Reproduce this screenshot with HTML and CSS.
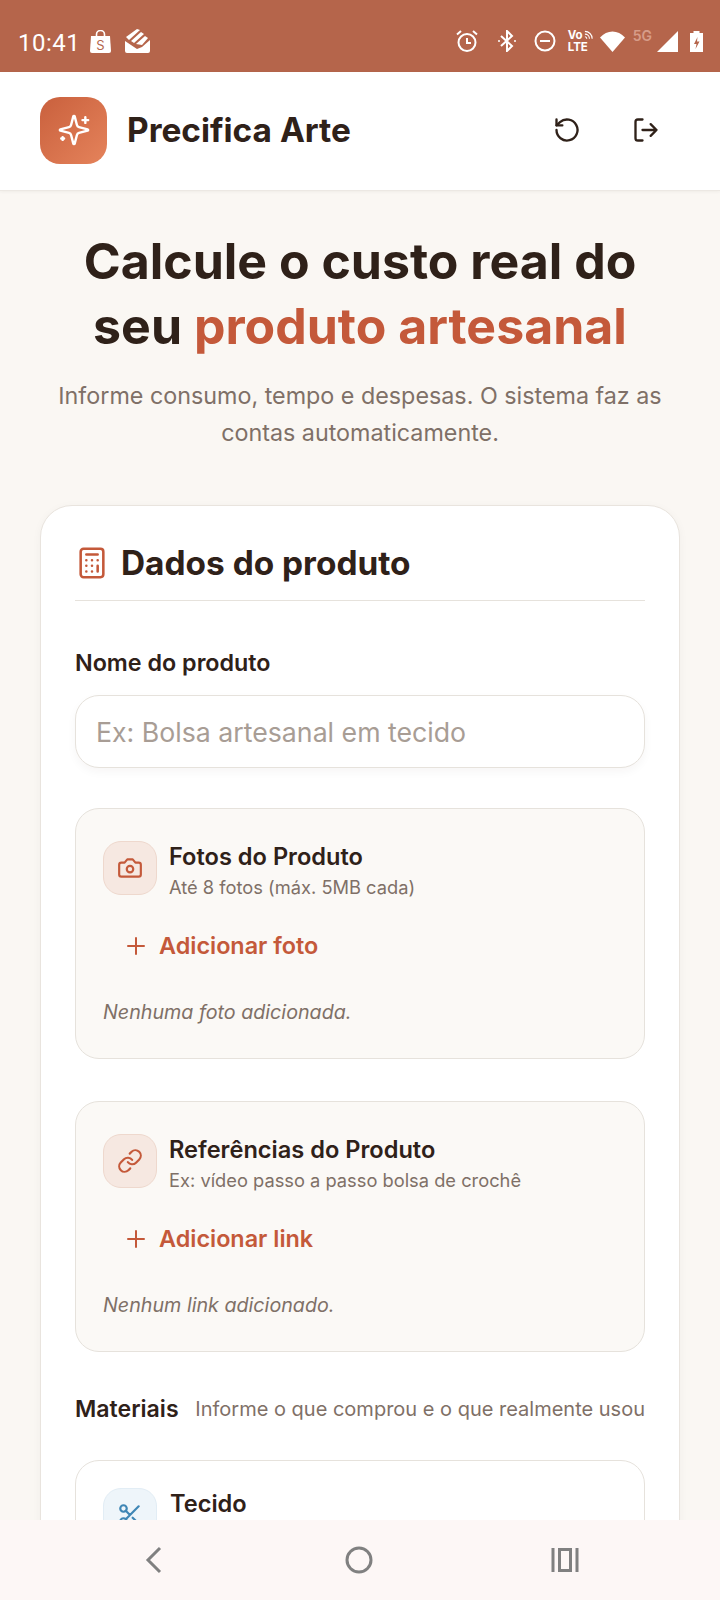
FILE: index.html
```html
<!DOCTYPE html>
<html lang="pt-BR">
<head>
    <meta charset="UTF-8">
    <meta name="viewport" content="width=device-width, initial-scale=1.0">
    <title>Precifica Arte</title>
    <link rel="stylesheet" href="styles.css">
</head>
<body>
    <div class="status-bar">
        <div class="status-left">
            <span class="clock">10:41</span>
            <svg class="bag" width="21" height="23" viewBox="0 0 21 23"><path d="M1 6h19l1 15a2 2 0 0 1-2 2H2a2 2 0 0 1-2-2z" fill="#fff"/><path d="M6.500 7V4.500a4 4 0 0 1 8 0V7" fill="none" stroke="#fff" stroke-width="1.600"/><text x="10.500" y="20" font-size="13" text-anchor="middle" fill="#b5654b" font-family="Inter">S</text></svg>
            <svg class="notif" width="25" height="24" viewBox="0 0 25 24"><path d="M1 8 12 0l3 1L4 11zM6 12 16 3l3 2L9 14zM11 15 20 7l3 2-6 7zM0 12l3 2 9 6 5-2 8-7v11a2 2 0 0 1-2 2H2a2 2 0 0 1-2-2z" fill="#fff"/></svg>
        </div>
        <div class="status-right">
            <svg class="ic-alarm" width="22" height="22" viewBox="0 0 22 22" fill="none" stroke="#fff" stroke-width="2"><circle cx="11" cy="12.500" r="8.500"/><path d="M11 8v5h4M1 4.500 5 1M21 4.500 17 1"/></svg>
            <svg class="ic-bt" width="18" height="22" viewBox="0 0 18 22" fill="none" stroke="#fff" stroke-width="2"><path d="M3 6l11 10-5 5V1l5 5L3 16"/><circle cx="1" cy="11" r="1" fill="#fff" stroke="none"/><circle cx="17" cy="11" r="1" fill="#fff" stroke="none"/></svg>
            <svg class="ic-dnd" width="22" height="22" viewBox="0 0 22 22" fill="none" stroke="#fff" stroke-width="2"><circle cx="11" cy="11" r="9.500"/><path d="M6 11h10"/></svg>
            <span class="volte">
                <span class="vo">Vo<svg width="10" height="10" viewBox="0 0 10 10" fill="none" stroke="#fff" stroke-width="1.200"><path d="M1 1a8 8 0 0 1 8 8M1 4a5 5 0 0 1 5 5M1 7a2 2 0 0 1 2 2"/></svg></span>
                <span>LTE</span>
            </span>
            <svg class="ic-wifi" width="25" height="21" viewBox="0 0 25 21"><path d="M0 6.500C7-1.500 18-1.500 25 6.500L12.500 21z" fill="#fff"/></svg>
            <span class="five-g">5G</span>
            <svg class="ic-signal" width="21" height="21" viewBox="0 0 21 21"><path d="M21 0v21H0z" fill="#fff"/></svg>
            <svg class="ic-batt" width="13" height="21" viewBox="0 0 13 21"><path d="M3.500 0h6v2H13v19H0V2h3.500z" fill="#fff"/><path d="M7.500 6 4 13h2.500L5.500 18 9.500 10.500H7z" fill="#b5654b"/></svg>
        </div>
    </div>

    <header class="app-header">
        <div class="logo">
            <svg width="34" height="34" viewBox="0 0 24 24" fill="none" stroke="#fff" stroke-width="1.700" stroke-linecap="round" stroke-linejoin="round"><path d="M9.937 15.500A2 2 0 0 0 8.500 14.063l-6.135-1.582a.5.5 0 0 1 0-.962L8.500 9.936A2 2 0 0 0 9.937 8.500l1.582-6.135a.5.5 0 0 1 .963 0L14.063 8.500A2 2 0 0 0 15.500 9.937l6.135 1.581a.5.5 0 0 1 0 .964L15.500 14.063a2 2 0 0 0-1.437 1.437l-1.582 6.135a.5.5 0 0 1-.963 0z"/><path d="M20 3v4M22 5h-4M4 17v2M5 18H3"/></svg>
        </div>
        <span class="app-name">Precifica Arte</span>
        <div class="header-actions">
            <svg width="28" height="28" viewBox="0 0 24 24" fill="none" stroke="#2f2119" stroke-width="2" stroke-linecap="round" stroke-linejoin="round"><path d="M3 12a9 9 0 1 0 3-6.700L3 8"/><path d="M3 3v5h5"/></svg>
            <svg width="28" height="28" viewBox="0 0 24 24" fill="none" stroke="#2f2119" stroke-width="2" stroke-linecap="round" stroke-linejoin="round"><path d="M9 21H5a2 2 0 0 1-2-2V5a2 2 0 0 1 2-2h4"/><path d="M16 17l5-5-5-5M21 12H9"/></svg>
        </div>
    </header>

    <main class="content">
        <section class="hero">
            <h1>Calcule o custo real do<br>seu <span class="accent">produto artesanal</span></h1>
            <p>Informe consumo, tempo e despesas. O sistema faz as contas automaticamente.</p>
        </section>

        <section class="card">
            <div class="card-title">
                <svg width="34" height="34" viewBox="0 0 24 24" fill="none" stroke="#c4593a" stroke-width="1.800" stroke-linecap="round" stroke-linejoin="round"><rect x="4" y="2" width="16" height="20" rx="2"/><path d="M8 6h8M16 14v4M8 10h.01M12 10h.01M16 10h.01M8 14h.01M12 14h.01M8 18h.01M12 18h.01"/></svg>
                <h2>Dados do produto</h2>
            </div>

            <label class="field-label" for="nome">Nome do produto</label>
            <input class="text-input" id="nome" type="text" placeholder="Ex: Bolsa artesanal em tecido">

            <div class="media-box">
                <div class="box-head">
                    <div class="box-icon">
                        <svg width="26" height="26" viewBox="0 0 24 24" fill="none" stroke="#c4593a" stroke-width="2" stroke-linecap="round" stroke-linejoin="round"><path d="M14.500 4h-5L7 7H4a2 2 0 0 0-2 2v9a2 2 0 0 0 2 2h16a2 2 0 0 0 2-2V9a2 2 0 0 0-2-2h-3z"/><circle cx="12" cy="13" r="3"/></svg>
                    </div>
                    <div>
                        <h3>Fotos do Produto</h3>
                        <p class="box-sub">Até 8 fotos (máx. 5MB cada)</p>
                    </div>
                </div>
                <div class="add-btn">
                    <svg width="24" height="24" viewBox="0 0 24 24" fill="none" stroke="#c4593a" stroke-width="2" stroke-linecap="round"><path d="M12 4v16M4 12h16"/></svg>
                    Adicionar foto
                </div>
                <p class="empty">Nenhuma foto adicionada.</p>
            </div>

            <div class="media-box">
                <div class="box-head">
                    <div class="box-icon">
                        <svg width="26" height="26" viewBox="0 0 24 24" fill="none" stroke="#c4593a" stroke-width="2" stroke-linecap="round" stroke-linejoin="round"><path d="M10 13a5 5 0 0 0 7.540.54l3-3a5 5 0 0 0-7.070-7.070l-1.720 1.710"/><path d="M14 11a5 5 0 0 0-7.540-.54l-3 3a5 5 0 0 0 7.070 7.070l1.710-1.710"/></svg>
                    </div>
                    <div>
                        <h3>Referências do Produto</h3>
                        <p class="box-sub">Ex: vídeo passo a passo bolsa de crochê</p>
                    </div>
                </div>
                <div class="add-btn">
                    <svg width="24" height="24" viewBox="0 0 24 24" fill="none" stroke="#c4593a" stroke-width="2" stroke-linecap="round"><path d="M12 4v16M4 12h16"/></svg>
                    Adicionar link
                </div>
                <p class="empty">Nenhum link adicionado.</p>
            </div>

            <div class="materials-head">
                <span class="materials-title">Materiais</span>
                <span class="materials-note">Informe o que comprou e o que realmente usou</span>
            </div>

            <div class="material-card">
                <div class="box-icon blue">
                    <svg width="26" height="26" viewBox="0 0 24 24" fill="none" stroke="#3f86b5" stroke-width="2" stroke-linecap="round" stroke-linejoin="round"><circle cx="6" cy="6" r="3"/><circle cx="6" cy="18" r="3"/><path d="M20 4 8.120 15.880M14.470 14.480 20 20M8.120 8.120 12 12"/></svg>
                </div>
                <h3>Tecido</h3>
            </div>
        </section>
    </main>

    <nav class="nav-bar">
        <svg width="24" height="32" viewBox="0 0 24 32" fill="none" stroke="#808080" stroke-width="3"><path d="M19 4 7 16l12 12"/></svg>
        <svg width="28" height="28" viewBox="0 0 28 28" fill="none" stroke="#808080" stroke-width="3"><circle cx="14" cy="14" r="12"/></svg>
        <svg width="28" height="24" viewBox="0 0 28 24" fill="none" stroke="#808080" stroke-width="3"><path d="M2 0v24M26 0v24"/><rect x="8.500" y="1.500" width="11" height="21"/></svg>
    </nav>
</body>
</html>
```

FILE: styles.css
```css
* {
    box-sizing: border-box;
}

body {
    font-family: Inter, "Liberation Sans", sans-serif;
    background-color: #faf7f3;
    color: #2f2119;
    margin: 0;
    width: 720px;
    height: 1600px;
    display: flex;
    flex-direction: column;
    overflow: hidden;
}

h1, h2, h3, p {
    margin: 0;
}

/* status bar */
.status-bar {
    flex: none;
    height: 72px;
    background-color: #b5654b;
    color: #fff;
    display: flex;
    justify-content: space-between;
    align-items: center;
    padding: 10px 17px 0 18px;
}

.status-left {
    display: flex;
    align-items: center;
}

.clock {
    font-family: Roboto, sans-serif;
    font-size: 24px;
    letter-spacing: 0.5px;
    margin-top: 3px;
}

.bag {
    margin-left: 10px;
}

.notif {
    margin-left: 14px;
}

.status-right {
    display: flex;
    align-items: center;
}

.ic-bt {
    margin-left: 20px;
}

.ic-dnd {
    margin-left: 18px;
}

.volte {
    display: flex;
    flex-direction: column;
    font-size: 11.500px;
    font-weight: 700;
    line-height: 12px;
    width: 25px;
    margin-left: 12px;
}

.vo {
    display: flex;
    align-items: center;
    gap: 1px;
}

.ic-wifi {
    margin-left: 7px;
}

.five-g {
    font-size: 14px;
    font-weight: 600;
    line-height: 14px;
    color: #d79c88;
    align-self: flex-start;
    margin-left: 8px;
}

.ic-signal {
    margin-left: 5px;
}

.ic-batt {
    margin-left: 12px;
}

/* header */
.app-header {
    flex: none;
    height: 119px;
    background-color: #fff;
    border-bottom: 1px solid #ece8e3;
    box-shadow: 0 1px 3px rgba(47, 33, 25, 0.05);
    display: flex;
    align-items: center;
    padding: 0 40px 2px;
}

.logo {
    width: 67px;
    height: 67px;
    border-radius: 20px;
    background: linear-gradient(135deg, #c9603d, #e5835b);
    display: flex;
    align-items: center;
    justify-content: center;
}

.app-name {
    font-size: 33.400px;
    font-weight: 700;
    margin-left: 20px;
}

.header-actions {
    margin-left: auto;
    display: flex;
    gap: 51px;
    padding-right: 20px;
}

/* main */
.content {
    flex: 1;
    min-height: 0;
    overflow: hidden;
    padding: 38px 40px 0;
}

.hero {
    text-align: center;
}

.hero h1 {
    font-size: 50px;
    font-weight: 700;
    line-height: 65px;
}

.accent {
    color: #c4593a;
}

.hero p {
    font-size: 23.300px;
    line-height: 37px;
    color: #7f7067;
    margin-top: 18px;
}

.card {
    background-color: #fff;
    border: 1px solid #e9e4de;
    border-radius: 32px;
    box-shadow: 0 2px 10px rgba(47, 33, 25, 0.04);
    margin-top: 54px;
    padding: 33px 34px;
}

.card-title {
    display: flex;
    align-items: center;
    gap: 12px;
    padding-bottom: 13px;
    border-bottom: 1px solid #e6e2dc;
}

.card-title h2 {
    font-size: 33.400px;
    font-weight: 700;
    line-height: 48px;
}

.field-label {
    display: block;
    font-size: 23.300px;
    font-weight: 600;
    line-height: 32px;
    margin-top: 46px;
}

.text-input {
    display: block;
    width: 100%;
    height: 73px;
    margin-top: 16px;
    padding: 0 20px;
    font-family: inherit;
    font-size: 26.700px;
    color: #2f2119;
    border: 1px solid #e6e2dc;
    border-radius: 24px;
    background-color: #fff;
    box-shadow: 0 4px 10px rgba(47, 33, 25, 0.04);
}

.text-input::placeholder {
    color: #a89d95;
}

.media-box {
    height: 251px;
    margin-top: 40px;
    padding: 32px 27px;
    background-color: #fbf9f6;
    border: 1px solid #e6e2dc;
    border-radius: 24px;
}

.media-box + .media-box {
    margin-top: 42px;
}

.box-head {
    display: flex;
    gap: 12px;
}

.box-icon {
    flex: none;
    width: 54px;
    height: 54px;
    border-radius: 18px;
    background-color: #f6e8e1;
    border: 1px solid #eed8cd;
    display: flex;
    align-items: center;
    justify-content: center;
}

.box-icon.blue {
    background-color: #eef5fa;
    border-color: #e2edf5;
}

h3 {
    font-size: 23.600px;
    font-weight: 600;
    line-height: 32px;
}

.box-sub {
    font-size: 18.300px;
    line-height: 28px;
    color: #7f7067;
}

.add-btn {
    display: flex;
    align-items: center;
    gap: 11px;
    font-size: 23.400px;
    font-weight: 600;
    color: #c4593a;
    line-height: 32px;
    margin-top: 29px;
    padding-left: 21px;
}

.empty {
    font-size: 19.700px;
    font-style: italic;
    line-height: 30px;
    color: #7f7067;
    margin-top: 35px;
}

.materials-head {
    display: flex;
    justify-content: space-between;
    align-items: center;
    margin-top: 43px;
}

.materials-title {
    font-size: 23.100px;
    font-weight: 600;
}

.materials-note {
    font-size: 20px;
    color: #7f7067;
}

.material-card {
    display: flex;
    gap: 13px;
    margin-top: 37px;
    padding: 27px;
    height: 200px;
    border: 1px solid #e6e2dc;
    border-radius: 24px;
}

/* android nav */
.nav-bar {
    flex: none;
    height: 80px;
    background-color: #fdf7f6;
    display: grid;
    grid-template-columns: repeat(3, 206px);
    justify-items: center;
    align-items: center;
    padding-left: 50px;
}
```
